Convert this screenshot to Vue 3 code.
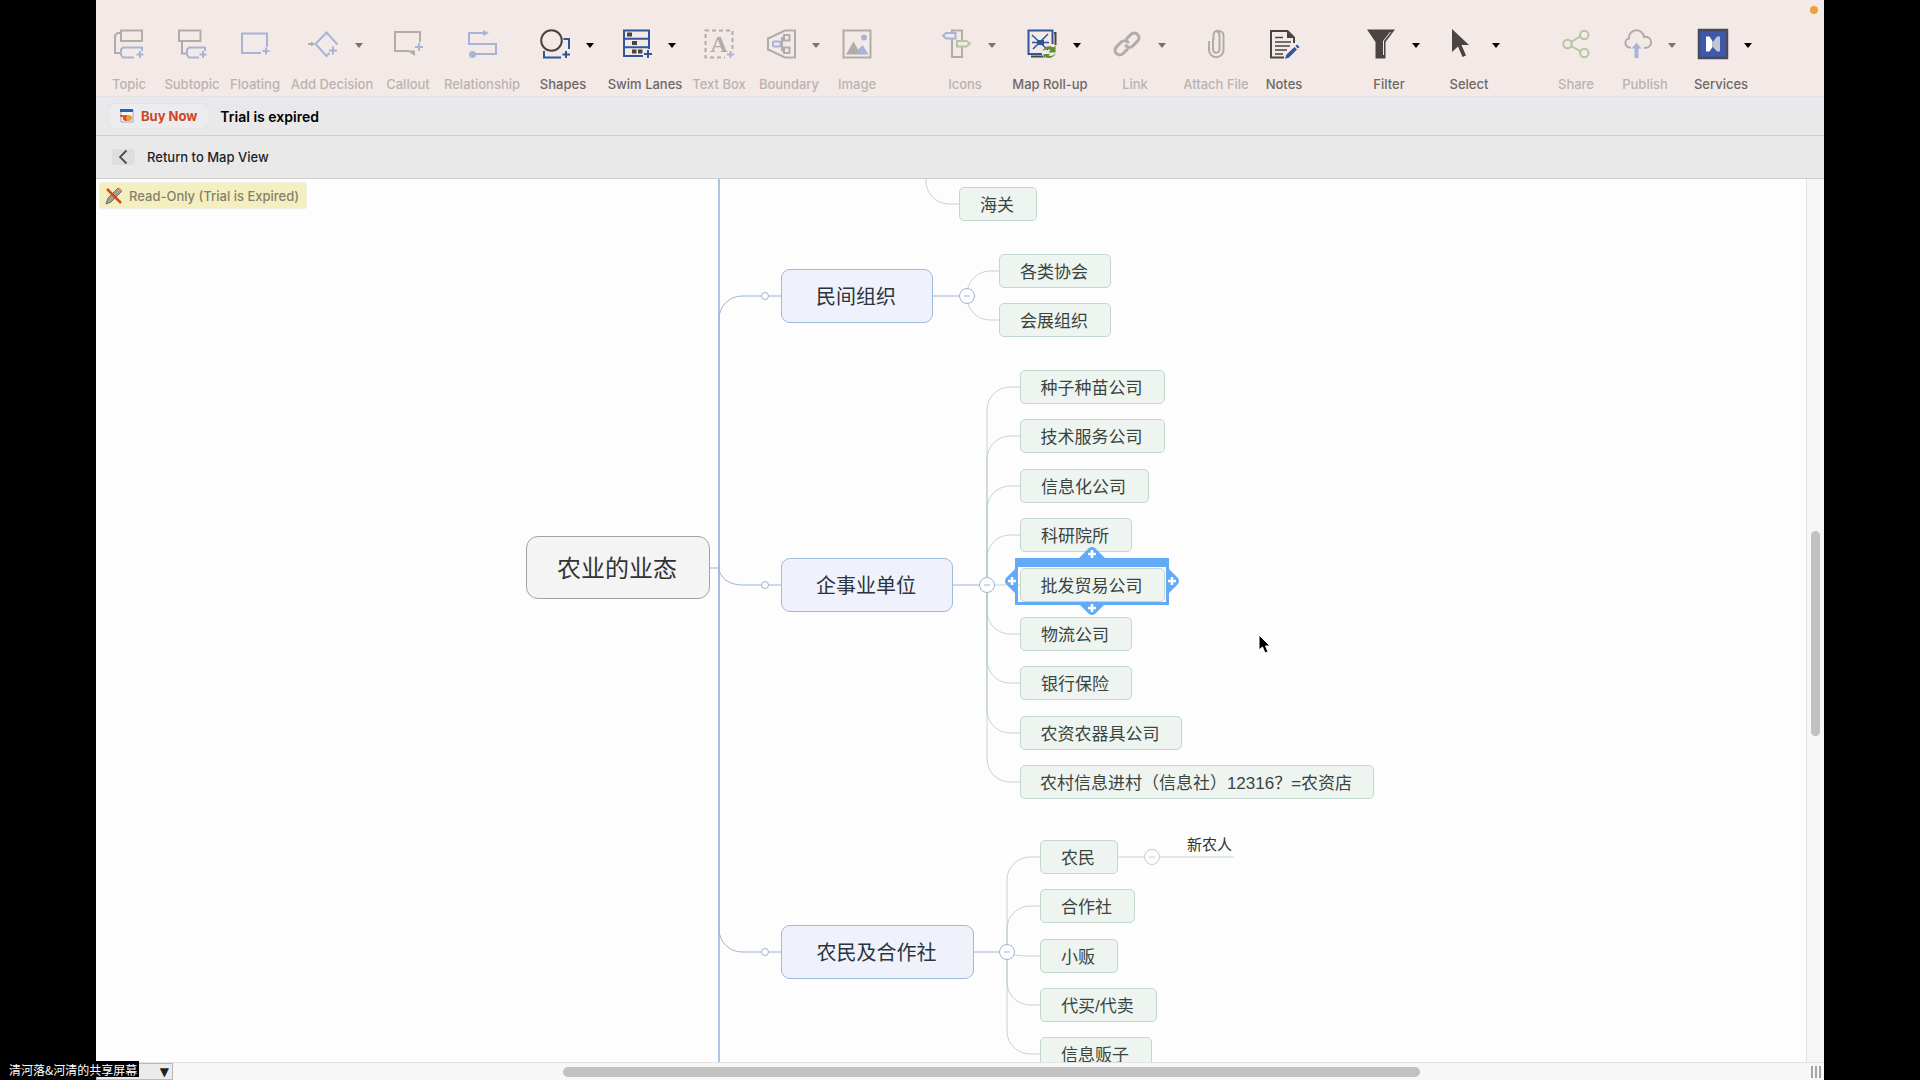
<script setup>
const toolGroups = [
  [
    { id: 'topic', label: 'Topic', width: 34, gap: 0, off: true },
    { id: 'subtopic', label: 'Subtopic', width: 56, gap: 18, off: true },
    { id: 'floating', label: 'Floating', width: 50, gap: 10, off: true },
    { id: 'decision', label: 'Add Decision', width: 84, gap: 10, off: true, menu: true },
    { id: 'callout', label: 'Callout', width: 44, gap: 12, off: true },
    { id: 'relationship', label: 'Relationship', width: 78, gap: 13, off: true },
    { id: 'shapes', label: 'Shapes', width: 64, gap: 10, menu: true },
    { id: 'lanes', label: 'Swim Lanes', width: 76, gap: 12, menu: true },
    { id: 'textbox', label: 'Text Box', width: 54, gap: 9, off: true },
    { id: 'boundary', label: 'Boundary', width: 64, gap: 11, off: true, menu: true },
    { id: 'image', label: 'Image', width: 38, gap: 17, off: true },
  ],
  [
    { id: 'icons', label: 'Icons', width: 64, gap: 3, off: true, menu: true },
    { id: 'rollup', label: 'Map Roll-up', width: 76, gap: 15, menu: true },
    { id: 'link', label: 'Link', width: 64, gap: 15, off: true, menu: true },
    { id: 'attach', label: 'Attach File', width: 66, gap: 16, off: true },
    { id: 'notes', label: 'Notes', width: 38, gap: 16 },
  ],
  [
    { id: 'filter', label: 'Filter', width: 64, gap: 0, menu: true },
    { id: 'select', label: 'Select', width: 64, gap: 16, menu: true },
  ],
  [
    { id: 'share', label: 'Share', width: 36, gap: 3, off: true },
    { id: 'publish', label: 'Publish', width: 64, gap: 19, off: true, menu: true },
    { id: 'services', label: 'Services', width: 64, gap: 12, menu: true },
  ],
]

const LEAF_H = 34
const BRANCH_H = 54
const SPINE_X = 623
const RADIUS = 23

const root = { text: '农业的业态', x: 430, y: 357, w: 184, h: 63 }

const branches = [
  {
    text: '民间组织', x: 685, y: 90, w: 152, hub: 871, leafX: 903,
    leaves: [
      { text: '各类协会', y: 75, w: 112 },
      { text: '会展组织', y: 124, w: 112 },
    ],
  },
  {
    text: '企事业单位', x: 685, y: 379, w: 172, hub: 891, leafX: 924,
    leaves: [
      { text: '种子种苗公司', y: 191, w: 145 },
      { text: '技术服务公司', y: 240, w: 145 },
      { text: '信息化公司', y: 290, w: 129 },
      { text: '科研院所', y: 339, w: 112 },
      { text: '批发贸易公司', y: 389, w: 145, selected: true },
      { text: '物流公司', y: 438, w: 112 },
      { text: '银行保险', y: 487, w: 112 },
      { text: '农资农器具公司', y: 537, w: 162 },
      { text: '农村信息进村（信息社）12316？=农资店', y: 586, w: 354 },
    ],
  },
  {
    text: '农民及合作社', x: 685, y: 746, w: 193, hub: 911, leafX: 944,
    leaves: [
      { text: '农民', y: 661, w: 78 },
      { text: '合作社', y: 710, w: 95 },
      { text: '小贩', y: 760, w: 78 },
      { text: '代买/代卖', y: 809, w: 117 },
      { text: '信息贩子', y: 858, w: 112 },
    ],
  },
]

const rootMid = root.y + 32
const mid = (branch) => branch.y + BRANCH_H / 2

// Elbow with a rounded corner: down (or up) a trunk, then right to the node.
function elbow(x, fromY, toY, endX) {
  const delta = toY - fromY
  const ry = Math.min(RADIUS, Math.abs(delta))
  if (ry === 0) return `M${x} ${fromY}H${endX}`
  const turnY = toY - Math.sign(delta) * ry
  const sweep = delta > 0 ? 0 : 1
  return `M${x} ${fromY}V${turnY}A${RADIUS} ${ry} 0 0 ${sweep} ${x + RADIUS} ${toY}H${endX}`
}

const branchLinks = branches.map((b) => elbow(SPINE_X, rootMid, mid(b), b.x))
const leafLinks = branches.flatMap((b) =>
  b.leaves.map((leaf) => elbow(b.hub, mid(b), leaf.y + LEAF_H / 2, b.leafX)),
)
const leaves = [
  { text: '海关', x: 863, y: 8, w: 78 },
  ...branches.flatMap((b) => b.leaves.map((leaf) => ({ ...leaf, x: b.leafX }))),
]

const box = (n) => ({ left: `${n.x}px`, top: `${n.y}px`, width: `${n.w}px` })
</script>

<template>
  <div class="screen">
    <div class="window">
      <header class="toolbar">
        <span class="recording"></span>
        <div v-for="(group, g) in toolGroups" :key="g" class="group">
          <button
            v-for="tool in group"
            :key="tool.id"
            type="button"
            class="tool"
            :class="{ off: tool.off, menu: tool.menu }"
            :disabled="tool.off"
            :style="{ width: tool.width + 'px', marginLeft: tool.gap + 'px' }"
          >
            <span class="face">
              <svg class="icon" viewBox="0 0 30 30" aria-hidden="true">
                <g v-if="tool.id === 'topic'">
                  <path class="k" d="M7 1.5h21v10.500H7zM7 4H3.500L1 6.500V24h5" />
                  <path class="b" d="M28 22v-3.500H9L7 20.500V26l2 2.500h11M26 22v7M22.500 25.500h7" />
                </g>
                <g v-else-if="tool.id === 'subtopic'">
                  <path class="k" d="M2 1.500h21.500v10.500H2zM5 12v12.500h5" />
                  <path class="b" d="M28 22v-3.500H12L10 20.500V26l2 2.500h10M26 22v7M22.500 25.500h7" />
                </g>
                <g v-else-if="tool.id === 'floating'">
                  <path class="b" d="M27 18V4.500H2V24h19M26 18.500v7M22.500 22h7" />
                </g>
                <g v-else-if="tool.id === 'decision'">
                  <path class="b" d="M28.500 15.500L17.500 3.500 6.500 15l11 12 3-3M24 17.500v8M20 21.500h8" />
                  <path class="k" d="M-1 15h6" />
                  <path class="kf" d="M2 12.500l4 2.500-4 2.500z" />
                </g>
                <g v-else-if="tool.id === 'callout'">
                  <path class="k" d="M27 13V3H2v19h14" />
                  <path class="kf" d="M14 21.500h8V27z" />
                  <path class="b" d="M26 14v8M22 18h8" />
                </g>
                <g v-else-if="tool.id === 'relationship'">
                  <path class="b" d="M18 4H2v11h27v10H6" />
                  <path class="bf" d="M16 1l6 3-6 3z" />
                  <circle class="bf" cx="5.500" cy="25.500" r="3.500" />
                </g>
                <g v-else-if="tool.id === 'shapes'">
                  <circle class="k" cx="11.500" cy="11.500" r="10.300" />
                  <path class="b" d="M23.500 10H29v10M4 22v6.500h17M26 22v7M22.500 25.500h7.500" />
                </g>
                <g v-else-if="tool.id === 'lanes'">
                  <path class="b" d="M27 20V1.500H2V27h19M2 9.700h25M2 18.300h25M26 21v8M22 25h8" />
                  <path class="kf" d="M5 3.500h5v4H5zM10 12h5v4h-5zM10 20.500h4.500v4H10zM16 20.500h4.500v4H16z" />
                </g>
                <g v-else-if="tool.id === 'textbox'">
                  <path class="k" stroke-dasharray="4 3" d="M28.500 20V1.500h-27v27H21" />
                  <text class="kf letter" x="15" y="23" text-anchor="middle">A</text>
                  <path class="b" d="M26.500 22v7M23 25.500h7" />
                </g>
                <g v-else-if="tool.id === 'boundary'">
                  <path class="k" d="M29 1.500v27H19L2 20.500v-11l17-8z" />
                  <path class="k" d="M18 6h5.500v5.500H18zM18 18.500h5.500V24H18zM18 9h-2v12.500h2M14.500 15H16" />
                  <rect class="b" x="7" y="12.500" width="7.500" height="5" rx="1" />
                </g>
                <g v-else-if="tool.id === 'image'">
                  <path class="k" d="M1.500 1.500h27v27h-27z" />
                  <path class="kf" d="M4 25.500l7.500-13 7.500 13z" />
                  <path class="bf" d="M15.500 21.500l5-5.500 6 9.500h-9z" />
                  <circle class="bf" cx="22" cy="8.500" r="3" />
                </g>
                <g v-else-if="tool.id === 'icons'">
                  <path class="k" d="M10 9.500v18.500h10V17.500M10 3V1.500h10V11.500" />
                  <path class="b" d="M4 4h9.500v5.500H4L1 6.700z" />
                  <path class="g" d="M15 12h9.500l3.500 2.500-3.500 3H15z" />
                </g>
                <g v-else-if="tool.id === 'rollup'">
                  <path class="k" d="M27 4h1.500v12M4 27.500h12" stroke-width="3" />
                  <path class="b" d="M25.500 15V1.500h-24V25H15" />
                  <path class="b thin" d="M5 6l16 15M21 5L6 20M5 13.500h17" />
                  <path class="bf" d="M10 11h7v5h-7z" />
                  <path class="gf" d="M15.500 22c2-5 8-6 10.500-3.500l2.500-2v7h-7l2-2.500c-2-1.500-5-.5-8 1zM29 24c-2 5-8 6-10.500 4l-2 1.500V25H23l-1.500 1.500c2 1 5 .5 7.500-2.500z" />
                </g>
                <g v-else-if="tool.id === 'link'" transform="rotate(-45 15 15)">
                  <path class="k fat" d="M12.500 19H5.500a4.700 4.700 0 0 1 0-9.400h7a4.700 4.700 0 0 1 4.300 6M17.500 11H24.500a4.700 4.700 0 0 1 0 9.400h-7a4.700 4.700 0 0 1-4.300-6" />
                </g>
                <g v-else-if="tool.id === 'attach'">
                  <path class="k" d="M12 9.500V20.500a3 3 0 0 0 6.500 0V7a5 5 0 0 0-3-5h2.500a4.500 4.500 0 0 1 4.500 4.500V21a7.200 7.200 0 0 1-14.500 0V12M12.500 11V6a4.500 4.500 0 0 1 4.500-4.500" />
                </g>
                <g v-else-if="tool.id === 'notes'">
                  <path class="k" d="M25 14V8.500L18.500 2H2v26.500h13" />
                  <path class="kf" d="M18 1l8 8h-8z" />
                  <path class="k thin" d="M6 8.500h8M6 13h16M6 17h15M6 21h12M6 25h8" />
                  <path class="bf" d="M16 30l1.500-4.500 8-7.500 2.500 2.500-8 8zM26.500 17l1.500-1.500 2.500 2.500-1.500 1.500z" />
                </g>
                <g v-else-if="tool.id === 'filter'">
                  <path class="kf" d="M1 .5h28L19.500 13v16.500h-10V13z" />
                  <path d="M24.500 3l-7 9v14" fill="none" stroke="#f2eae7" stroke-width="1" />
                </g>
                <g v-else-if="tool.id === 'select'">
                  <path class="kf" d="M6 0l17 16h-7.500l4.500 10.500-3.500 1.500-4.500-10.500-6 5.500z" />
                </g>
                <g v-else-if="tool.id === 'share'">
                  <path class="g" d="M10 13l9-5.500M10 17l9 5" />
                  <circle class="g" cx="6.500" cy="15" r="4.200" />
                  <circle class="g" cx="23.300" cy="6" r="4.200" />
                  <circle class="g" cx="23.300" cy="24" r="4.200" />
                </g>
                <g v-else-if="tool.id === 'publish'">
                  <path class="k" d="M9 18.500A4.500 4.500 0 1 1 7 9.500a7.500 7.500 0 0 1 15-1.500 5.500 5.500 0 1 1 0 10.500" />
                  <path class="bf" d="M14.500 13.500l5 6h-3V29h-4v-9.500h-3z" />
                </g>
                <g v-else>
                  <path d="M1 1h28v28H1z" fill="#3f58ab" stroke="#4a4957" stroke-width="2.500" />
                  <path d="M8 7.500h3.500l3 4.500v6l-3 4.500H8z" fill="#fff" />
                  <path d="M22 7.500h-3l-4.500 6v4l4.500 5h3z" fill="#c3c4d4" />
                </g>
              </svg>
              <i v-if="tool.menu" class="caret"></i>
            </span>
            <span class="label">{{ tool.label }}</span>
          </button>
        </div>
      </header>

      <div class="trial">
        <button type="button" class="buy">
          <svg width="14" height="14" viewBox="0 0 14 14" aria-hidden="true">
            <path d="M1 1h12v12H1z" fill="#f7f7f8" stroke="#9fa6b5" />
            <path d="M0 0h13v3H0z" fill="#2f5fb0" />
            <circle cx="6" cy="9" r="3" fill="#dc4a22" />
            <circle cx="9" cy="9" r="3" fill="#f0993a" />
            <path d="M0 6h4v2H0z" fill="#e0572c" />
          </svg>
          Buy Now
        </button>
        <strong>Trial is expired</strong>
      </div>

      <nav class="return">
        <button type="button" class="back" aria-label="Back">
          <svg width="10" height="16" viewBox="0 0 10 16" aria-hidden="true">
            <path d="M7.500 1.500L1 8l6.500 6.500" fill="none" stroke="#4c4c4c" stroke-width="1.800" />
          </svg>
        </button>
        <span>Return to Map View</span>
      </nav>

      <div class="work">
        <main class="canvas">
          <svg class="links" aria-hidden="true">
            <path class="spine" :d="`M${SPINE_X} 0V884`" />
            <path class="line blue" :d="`M614 ${rootMid}h9`" />
            <path v-for="d in branchLinks" :key="d" class="line blue" :d="d" />
            <path v-for="d in leafLinks" :key="d" class="line green" :d="d" />
            <path class="line green" d="M830 0V2A23 23 0 0 0 853 25H863M1022 678H1138" />
            <template v-for="b in branches" :key="b.text">
              <path class="line blue" :d="`M${b.x + b.w} ${mid(b)}H${b.hub}`" />
              <circle class="knob" cx="669" :cy="mid(b)" r="3.500" />
              <circle class="knob" :cx="b.hub" :cy="mid(b)" r="7.500" />
              <path class="line blue" :d="`M${b.hub - 3} ${mid(b)}h6`" />
            </template>
            <circle class="knob pale" cx="1056" cy="678" r="7.500" />
            <path class="line green" d="M1053 678h6" />
          </svg>

          <div class="node root" :style="box(root)">{{ root.text }}</div>
          <div v-for="b in branches" :key="b.text" class="node branch" :style="box(b)">{{ b.text }}</div>
          <div
            v-for="leaf in leaves"
            :key="leaf.text"
            class="node leaf"
            :class="{ selected: leaf.selected }"
            :style="box(leaf)"
          >
            {{ leaf.text }}
            <svg v-if="leaf.selected" class="frame" viewBox="0 0 174 68" aria-hidden="true">
              <path
                fill="#63aaf7" fill-rule="evenodd"
                d="M10 11H74L84 1Q87 -1 90 1L100 11H164V22L173 31Q175 34 173 37L164 46V58H99L90 67Q87 69 84 67L75 58H10V46L1 37Q-1 34 1 31L10 22ZM13 20V55H161V20Z"
              />
              <path d="M87 3v8M83 7h8M87 57v8M83 61h8M7 30v8M3 34h8M167 30v8M163 34h8" stroke="#fff" stroke-width="2.500" />
            </svg>
          </div>
          <div class="note">新农人</div>

          <div class="readonly">
            <svg width="18" height="18" viewBox="0 0 18 18" aria-hidden="true">
              <path d="M1 17l2-6L13 1l4 3L6 15z" fill="#a5a08b" stroke="#75705f" />
              <path d="M12 2l3-1 2 3-2 1z" fill="#dd8c78" />
              <path d="M2 2l14 14" stroke="#e0421f" stroke-width="2.500" />
            </svg>
            Read-Only (Trial is Expired)
          </div>

          <svg class="cursor" width="14" height="20" viewBox="0 0 14 20" aria-hidden="true">
            <path d="M1 1v15l3.500-3 2.500 6 3-1.300-2.500-5.700H12z" fill="#000" stroke="#fff" />
          </svg>
        </main>
        <div class="vbar"><div class="vthumb"></div></div>
      </div>

      <footer class="hbar">
        <button type="button" class="picker" aria-label="Pages">▼</button>
        <div class="htrack"><div class="hthumb"></div></div>
        <div class="grip"><i></i><i></i><i></i></div>
      </footer>
    </div>
    <div class="sharing">清河落&amp;河清的共享屏幕</div>
  </div>
</template>

<style>
body {
  margin: 0;
  background: #000;
}
</style>

<style scoped>
.screen {
  position: relative;
  height: 100vh;
  padding: 0 5%;
  background: #000;
  font-family: Inter, "Noto Sans CJK SC", sans-serif;
  font-size: 13px;
  font-weight: 500;
  color: #1f1f1f;
  overflow: hidden;
}
.screen,
.screen * {
  box-sizing: border-box;
}
button {
  margin: 0;
  padding: 0;
  border: 0;
  background: none;
  font: inherit;
  color: inherit;
}
.window {
  display: flex;
  flex-direction: column;
  height: 100%;
  background: #fdfdfd;
}
.toolbar {
  position: relative;
  display: flex;
  justify-content: space-between;
  flex: none;
  height: 97px;
  padding: 29px 71px 0 16px;
  background: #f3eae7;
  border-bottom: 1px solid #e7e0e2;
}
.recording {
  position: absolute;
  top: 6px;
  right: 6px;
  width: 8px;
  height: 8px;
  border-radius: 50%;
  background: #eda13c;
}
.group {
  display: flex;
}
.tool {
  --k: #4a4543;
  --b: #31549b;
  --g: #5f8c34;
  display: flex;
  flex-direction: column;
  align-items: center;
  flex: none;
  height: 64px;
  color: #6d6866;
}
.tool.off {
  --k: #b1abaa;
  --b: #a8b4d6;
  --g: #b4c6a0;
  color: #b9b3b1;
}
.face {
  display: flex;
  align-items: center;
  height: 30px;
}
.menu .face {
  gap: 16px;
  width: 64px;
  padding-left: 9px;
}
.icon {
  flex: none;
  width: 30px;
  height: 30px;
  overflow: visible;
}
.caret {
  border: 4px solid transparent;
  border-top: 5px solid #000;
  border-bottom: 0;
  margin-top: 3px;
}
.off .caret {
  border-top-color: #77716f;
}
.label {
  margin-top: 16px;
  line-height: 18px;
  white-space: nowrap;
}
.k,
.b,
.g {
  fill: none;
  stroke-width: 2;
}
.k {
  stroke: var(--k);
}
.b {
  stroke: var(--b);
}
.g {
  stroke: var(--g);
}
.kf {
  fill: var(--k);
}
.bf {
  fill: var(--b);
}
.gf {
  fill: var(--g);
}
.thin {
  stroke-width: 1.5;
}
.fat {
  stroke-width: 3;
}
.letter {
  font: bold 24px "Liberation Serif", serif;
}
.trial {
  display: flex;
  align-items: center;
  flex: none;
  gap: 12px;
  height: 39px;
  padding-left: 13px;
  background: linear-gradient(#e8e8ee, #e9e9e9 60%);
  border-bottom: 1px solid #cfcfcf;
  color: #000;
}
.trial strong {
  font-size: 14px;
  font-weight: 600;
}
.buy {
  display: flex;
  align-items: center;
  gap: 7px;
  height: 24px;
  padding: 0 11px;
  border-radius: 5px;
  background: #ececee;
  box-shadow: 0 0 1px #cdcdd2;
  color: #cc4523;
  font-weight: 700;
}
.return {
  display: flex;
  align-items: center;
  flex: none;
  gap: 12px;
  height: 43px;
  padding-left: 16px;
  background: #e9e9e9;
  border-bottom: 1px solid #cfcfcf;
}
.back {
  display: flex;
  align-items: center;
  justify-content: center;
  width: 23px;
  height: 16px;
  border-radius: 3px;
  background: #dedede;
}
.work {
  display: flex;
  flex: 1;
  min-height: 0;
}
.canvas {
  position: relative;
  flex: 1;
  overflow: hidden;
  background: #fdfdfd;
}
.links {
  position: absolute;
  width: 100%;
  height: 100%;
}
.spine {
  stroke: #abc6e3;
  stroke-width: 2;
}
.line {
  fill: none;
  stroke-width: 1;
}
.blue {
  stroke: #9fb5d4;
}
.green {
  stroke: #a9c6b6;
  stroke-opacity: 0.7;
}
.knob {
  fill: #fdfdfd;
  stroke: #9fb5d4;
}
.pale {
  stroke: #c3d2ca;
}
.node {
  position: absolute;
  display: flex;
  align-items: center;
  justify-content: center;
  padding: 0 2px 2px 0;
  border: 1px solid;
  white-space: nowrap;
  font-family: "Liberation Sans", "Noto Sans CJK SC", sans-serif;
  font-weight: 400;
}
.root {
  height: 63px;
  border-color: #a3a3a3;
  border-radius: 12px;
  background: #f4f4f4;
  font-size: 24px;
  color: #333;
}
.branch {
  height: 54px;
  border-color: #9dbbdc;
  border-radius: 9px;
  background: #eff2fb;
  font-size: 20px;
  color: #2b3440;
}
.leaf {
  height: 34px;
  border-color: #c3d8cc;
  border-radius: 5px;
  background: #eef4f0;
  font-size: 17px;
  color: #3a443e;
}
.frame {
  position: absolute;
  left: -16px;
  top: -22px;
  width: 174px;
  height: 68px;
  overflow: visible;
}
.note {
  position: absolute;
  left: 1091px;
  top: 656px;
  font-size: 15px;
  font-weight: 400;
  line-height: 20px;
  color: #333;
}
.readonly {
  position: absolute;
  left: 4px;
  top: 4px;
  display: flex;
  align-items: center;
  gap: 6px;
  height: 25px;
  padding: 0 7px 0 5px;
  background: #f4efc0;
  box-shadow: 0 0 2px #dcd8b0;
  color: #858169;
}
.cursor {
  position: absolute;
  left: 1162px;
  top: 455px;
}
.vbar {
  flex: none;
  width: 18px;
  padding: 0 4px;
  background: #f6f6f6;
  border-left: 1px solid #e4e4e4;
}
.vthumb {
  width: 9px;
  height: 23.2%;
  margin-top: 352px;
  border-radius: 5px;
  background: #c1c1c1;
}
.hbar {
  display: flex;
  flex: none;
  height: 18px;
  background: #f7f7f7;
  border-top: 1px solid #e2e2e2;
}
.picker {
  width: 77px;
  padding-right: 3px;
  border: 1px solid #b9b9b9;
  background: #ebebeb;
  font: 12px/16px "DejaVu Sans", sans-serif;
  text-align: right;
}
.htrack {
  flex: 1;
  padding-top: 4px;
}
.hthumb {
  width: 52.4%;
  height: 10px;
  margin-left: 23.8%;
  border-radius: 5px;
  background: #c1c1c1;
}
.grip {
  display: flex;
  gap: 2px;
  width: 14px;
  padding: 3px 0 2px 1px;
}
.grip i {
  width: 2px;
  background: #a5a5a5;
}
.sharing {
  position: absolute;
  left: 0;
  bottom: 3px;
  height: 16px;
  padding: 0 2px 0 9px;
  background: #000;
  color: #fff;
  font: 12px/17px "Noto Sans CJK SC", sans-serif;
}
</style>
